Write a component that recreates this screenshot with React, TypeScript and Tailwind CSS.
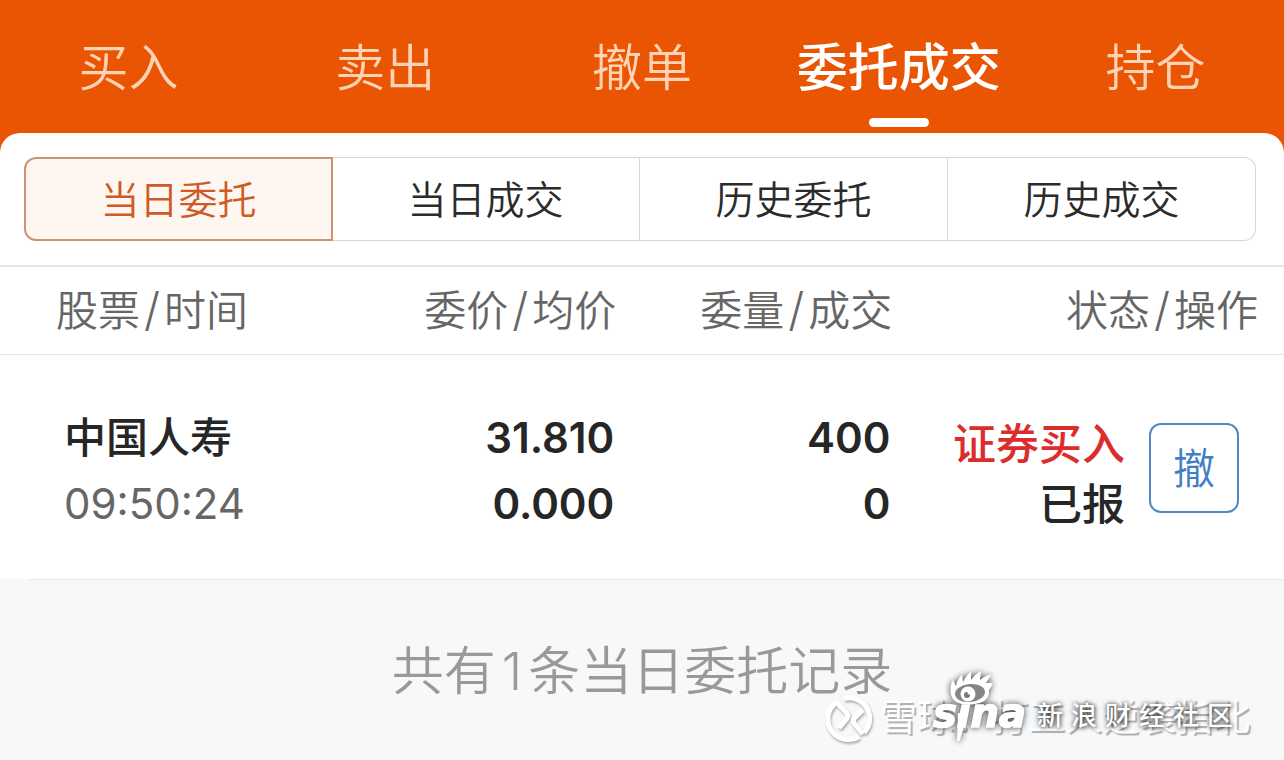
const tabs = ["买入", "卖出", "撤单", "委托成交", "持仓"];
const filters = ["当日委托", "当日成交", "历史委托", "历史成交"];
const activeTab = "委托成交";
const activeFilter = "当日委托";

const orders = [
  {
    name: "中国人寿",
    time: "09:50:24",
    price: "31.810",
    average: "0.000",
    amount: "400",
    filled: "0",
    side: "证券买入",
    status: "已报",
  },
];

function TopTabs() {
  return (
    <nav className="grid grid-cols-5 pb-1.5">
      {tabs.map((tab) => (
        <button
          key={tab}
          type="button"
          className={
            tab === activeTab
              ? "flex flex-col items-center whitespace-nowrap pt-[30px] text-[51px] leading-[76px] font-medium text-white"
              : "flex flex-col items-center whitespace-nowrap pt-[30px] text-[50px] leading-[76px] font-[350] text-[#ffd3b3]"
          }
        >
          {tab}
          {tab === activeTab && <span className="mt-3 h-[9px] w-15 rounded-full bg-white" />}
        </button>
      ))}
    </nav>
  );
}

function Filters() {
  return (
    <div className="mr-7 ml-6 grid grid-cols-4">
      {filters.map((filter, i) => (
        <button
          key={filter}
          type="button"
          className={
            filter === activeFilter
              ? "z-10 -mr-px h-[84px] rounded-l-xl border-2 border-[#cd9473] bg-[#fef6f0] pt-0.5 text-[39px] font-[350] text-[#cf5a26]"
              : i === filters.length - 1
                ? "h-[84px] rounded-r-xl border border-l-0 border-[#d6d7d9] pt-0.5 text-[39px] font-[350] text-[#2b2b2b]"
                : "h-[84px] border-y border-r border-[#d6d7d9] pt-0.5 text-[39px] font-[350] text-[#2b2b2b]"
          }
        >
          {filter}
        </button>
      ))}
    </div>
  );
}

function PairHeading({ first, second }: { first: string; second: string }) {
  return (
    <>
      {first}
      <span className="mx-1 text-[46px] leading-none">/</span>
      {second}
    </>
  );
}

function Orders() {
  return (
    <table className="w-full table-fixed border-t-2 border-[#e4e5e5] text-[42px] leading-[66px]">
      <colgroup>
        <col className="w-[26%]" />
        <col className="w-[22%]" />
        <col className="w-[21.5%]" />
        <col />
      </colgroup>
      <thead>
        <tr className="h-[88px] border-b border-[#e4e5e5] whitespace-nowrap text-[#666]">
          <th className="pt-0.5 pl-14 text-left font-[350]">
            <PairHeading first="股票" second="时间" />
          </th>
          <th className="pt-0.5 text-right font-[350]">
            <PairHeading first="委价" second="均价" />
          </th>
          <th className="pt-0.5 text-right font-[350]">
            <PairHeading first="委量" second="成交" />
          </th>
          <th className="pt-0.5 pr-[26px] text-right font-[350]">
            <PairHeading first="状态" second="操作" />
          </th>
        </tr>
      </thead>
      <tbody>
        {orders.map((order) => (
          <tr key={order.time} className="h-[225px] whitespace-nowrap text-[#262626]">
            <td className="pt-2 pl-16">
              <div className="font-medium">{order.name}</div>
              <div className="text-[#666]">{order.time}</div>
            </td>
            <td className="pt-2 pr-0.5 text-right font-semibold">
              <div>{order.price}</div>
              <div>{order.average}</div>
            </td>
            <td className="pt-2 pr-0.5 text-right font-semibold">
              <div>{order.amount}</div>
              <div>{order.filled}</div>
            </td>
            <td className="pt-0.5 pr-[45px]">
              <div className="flex items-center justify-end gap-6">
                <div className="pt-3 text-right text-[43px] leading-[60px] font-medium">
                  <div className="text-[#dc2c2c]">{order.side}</div>
                  <div>{order.status}</div>
                </div>
                <button
                  type="button"
                  className="size-[90px] rounded-xl border-2 border-[#4f8ac4] pt-0.5 text-[42px] font-[350] text-[#3f7fc8]"
                >
                  撤
                </button>
              </div>
            </td>
          </tr>
        ))}
      </tbody>
    </table>
  );
}

function SnowballMark() {
  return (
    <svg viewBox="0 0 48 48" className="size-12 shrink-0 drop-shadow-[1px_2px_1px_rgba(0,0,0,0.3)]" fill="none" stroke="#fff" strokeWidth="5">
      <path d="M9.5 9 A20.5 20.5 0 0 0 33 42.5" />
      <path d="M18 4.5 A20.5 20.5 0 0 1 38 38.5" />
      <path d="M9 7 L20 18 Q23 21 20.5 25 L13 34" strokeLinejoin="round" />
      <path d="M36.5 16 L28.5 24 Q26 27 28.5 30 L37 40" strokeLinejoin="round" />
    </svg>
  );
}

function SinaMark() {
  return (
    <svg viewBox="0 0 100 76" className="h-[76px] w-[100px] shrink-0 drop-shadow-[0_0_3px_rgba(0,0,0,0.75)]">
      <text x="4" y="59" fill="#fff" stroke="#fff" strokeWidth="1.6" fontFamily="'DejaVu Sans', sans-serif" fontWeight="700" fontStyle="italic" fontSize="40">
        sina
      </text>
      <path d="M29 45 L39 45 L31 72 Q28 76 28 70 Z" fill="#fff" />
      <path
        d="M22 27 Q20 18 24 12 L27 18 Q28 11 33 7 L34 14 Q37 7 42 4 L42 12 Q46 6 52 3 L51 12 Q57 7 62 7 L57 15 Q61 14 64 16 L60 22 Q61 32 51 35 Q36 39 27 34 Q23 31 22 27 Z"
        fill="#fff"
      />
      <ellipse cx="41" cy="25" rx="15" ry="9" fill="#858585" transform="rotate(-6 41 25)" />
      <circle cx="39" cy="26" r="7.5" fill="#fff" />
      <circle cx="38" cy="27" r="3" fill="#777" />
      <circle cx="40" cy="25" r="1.5" fill="#fff" />
    </svg>
  );
}

function Watermarks() {
  return (
    <div className="pointer-events-none absolute right-0 bottom-0 h-24 w-[460px]">
      <div className="absolute top-[26px] left-0.5 flex items-center gap-1.5 text-[37px] leading-[56px] whitespace-nowrap text-white [text-shadow:2px_2px_1px_rgba(0,0,0,0.3)]">
        <SnowballMark />
        雪球：打工人逆袭指北
      </div>
      <div className="absolute top-1 left-[105px] flex items-center">
        <SinaMark />
        <div className="mt-5 ml-2 flex gap-2 text-[26px] leading-10 font-medium text-white [text-shadow:0_0_5px_rgba(0,0,0,0.7),1px_1px_4px_rgba(0,0,0,0.5)]">
          {Array.from("新浪财经社区").map((char) => (
            <span key={char}>{char}</span>
          ))}
        </div>
      </div>
    </div>
  );
}

export default function App() {
  return (
    <div className="relative min-h-screen overflow-hidden bg-[#f7f8fa] font-['Inter','Noto_Sans_CJK_SC',sans-serif]">
      <header className="bg-[#ea5504]">
        <TopTabs />
        <div className="rounded-t-[20px] bg-white py-6">
          <Filters />
        </div>
      </header>
      <main>
        <div className="bg-white">
          <Orders />
        </div>
        <div className="ml-7 border-t border-[#e8e9ea]" />
        <p className="pt-[54px] pb-11 text-center text-[52px] leading-[76px] font-[350] text-[#999]">
          共有<span className="mx-1.5">1</span>条当日委托记录
        </p>
      </main>
      <Watermarks />
    </div>
  );
}
